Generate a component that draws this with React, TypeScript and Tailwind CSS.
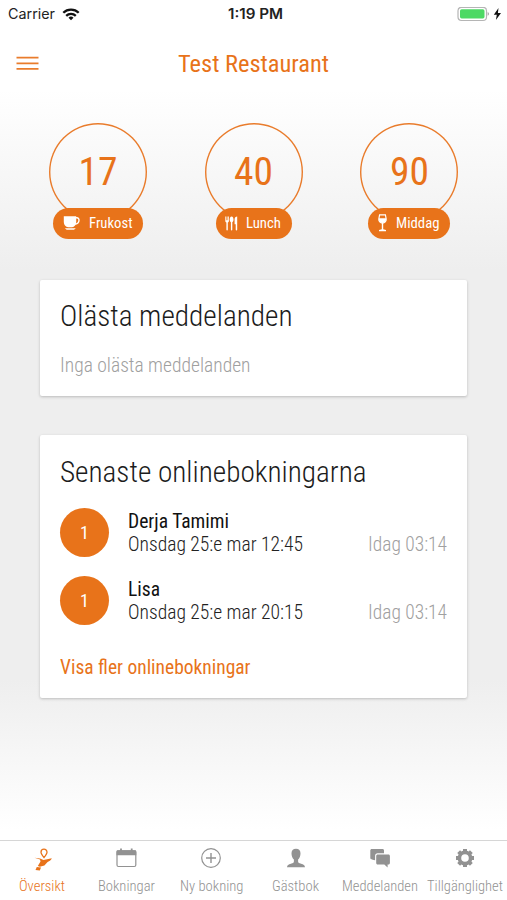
import { useLayoutEffect, useRef, useState, type ReactNode } from "react";

/** Single line of text condensed horizontally to a given width. */
function Fit({ w, className = "", children }: { w: number; className?: string; children: ReactNode }) {
  const ref = useRef<HTMLSpanElement>(null);
  const [scale, setScale] = useState(0.88);
  useLayoutEffect(() => {
    if (ref.current && ref.current.offsetWidth) setScale(w / ref.current.getBoundingClientRect().width * scale);
  }, [w]);
  return (
    <span className={`block whitespace-nowrap ${className}`} style={{ width: w }}>
      <span ref={ref} className="inline-block origin-left" style={{ transform: `scaleX(${scale})` }}>
        {children}
      </span>
    </span>
  );
}

const CupIcon = () => (
  <svg width="17" height="15" viewBox="0 0 17 15" fill="none">
    <path d="M.8.3h12.400v5.700c0 2.900-1.700 4.900-4.200 5.300H5.200C2.600 10.800.8 8.800.8 6z" fill="white" />
    <path d="M12.500 1.800h1.300c3.200 0 3.200 5.900-2 6.200" stroke="white" strokeWidth="1.400" />
    <path d="M1.800 12.200h11l-1.800 1.600H3.700z" fill="white" />
  </svg>
);
const CutleryIcon = () => (
  <svg width="13" height="15" viewBox="0 0 13 15" fill="white">
    <path d="M.3.5h.8v3.700h.6V.5h.8v3.700h.6V.5h.8v4.200c0 1-.5 1.500-1.100 1.800v7.300c0 .8-1.400.8-1.400 0V6.500C.800 6.200.3 5.700.3 4.700z" />
    <path d="M6.600.4c1.300 0 1.900 1.500 1.900 3.200 0 1.400-.5 2.300-1.200 2.700v7.500c0 .8-1.400.8-1.400 0V6.300C5.200 5.900 4.700 5 4.700 3.600 4.700 1.900 5.300.4 6.600.4z" />
    <path d="M12.200.5v13.300c0 .8-1.500.8-1.500 0V8.200H9.600V3.500c0-1.800 1-3 2.600-3z" />
  </svg>
);
const WineIcon = () => (
  <svg width="9" height="18" viewBox="0 0 9 18" fill="none">
    <path d="M1.600.9h5.800l.8 4.100c.2 2.300-1.500 4.100-3.700 4.100S.6 7.300.8 5z" stroke="white" strokeWidth="1.200" />
    <path d="M1 4.200h7v1.500C7.800 7.500 6.300 9 4.500 9S1.200 7.500 1 5.700z" fill="white" />
    <path d="M3.800 8.800h1.400v6.500l2.800.8v1.200H1v-1.200l2.800-.8z" fill="white" />
  </svg>
);

function Meal({ count, countW, label, labelW, pill, icon }: {
  count: string; countW: number; label: string; labelW: number; pill: string; icon: ReactNode;
}) {
  return (
    <div className="flex w-[98px] flex-col items-center">
      <div className="flex h-[98px] w-[98px] items-center justify-center rounded-full text-[39.500px] leading-[46px] text-[#e8731a] shadow-[inset_0_0_0_1.4px_#e97c2c]">
        <Fit w={countW}>{count}</Fit>
      </div>
      <div className={`relative -mt-[13.500px] flex h-[31.500px] items-center rounded-full bg-[#e8731a] text-[15px] leading-[18px] text-white ${pill}`}>
        {icon}
        <Fit w={labelW}>{label}</Fit>
      </div>
    </div>
  );
}

function Booking({ name, nameW, when }: { name: string; nameW: number; when: string }) {
  return (
    <div className="flex h-[49px] items-center">
      <div className="flex h-[49px] w-[49px] shrink-0 items-center justify-center rounded-full bg-[#e8731a] text-[19px] text-white">
        <Fit w={9}>1</Fit>
      </div>
      <div className="ml-[18.500px] flex-1 text-[19.500px] leading-[23px]">
        <Fit w={nameW} className="text-[#111]">{name}</Fit>
        <div className="flex justify-between font-light">
          <Fit w={175} className="text-[#222]">{when}</Fit>
          <Fit w={79} className="text-[#a0a0a0]">Idag 03:14</Fit>
        </div>
      </div>
    </div>
  );
}

const OverviewIcon = () => (
  <svg width="20" height="24" viewBox="0 0 20 24" fill="none">
    <path d="M11 9.500C9.200 7.200 8 5.700 8 4.200a3 3 0 0 1 6 0c0 1.500-1.200 3-3 5.300z" stroke="#e8731a" strokeWidth="1.300" />
    <path d="M1.500 9.800 7 10.600l3.500 1.400 8.300-1.700c-.6 1.700-2.200 3-4.200 3.700l-3.200 3.600-4.600 1.200-2-.9 2.700-4.400-.5-1.900z" fill="#e8731a" />
    <path d="m3.800 19 4.200.6-1.200 2.900-4.300-.4z" fill="#e8731a" />
  </svg>
);
const CalendarIcon = () => (
  <svg width="21" height="20" viewBox="0 0 21 20" fill="none">
    <rect x="1" y="2.800" width="18.800" height="15.700" rx="1.500" stroke="#929292" strokeWidth="1.200" />
    <path d="M.5 3.500c0-.8.5-1.300 1.300-1.300H19c.8 0 1.300.5 1.300 1.300v3.700H.5z" fill="#929292" />
    <path d="M5 .5v3M15.700.5v3" stroke="#929292" strokeWidth="1.800" />
  </svg>
);
const PlusIcon = () => (
  <svg width="22" height="22" viewBox="0 0 22 22" fill="none" stroke="#929292">
    <circle cx="11" cy="11" r="9.300" strokeWidth="1.200" />
    <path d="M6 11h10M11 6v10" strokeWidth="1.400" />
  </svg>
);
const PersonIcon = () => (
  <svg width="20" height="20" viewBox="0 0 20 20" fill="#929292">
    <path d="M10 .8c3 0 4.600 1.700 4.500 4.600 0 2.600-1 4.800-2.400 6v2c0 1.300 1.100 1.700 3 2.300 2.500.8 3.600 1.200 3.900 3.500H1c.3-2.300 1.400-2.700 3.900-3.500 1.900-.6 3-1 3-2.300v-2c-1.400-1.200-2.400-3.400-2.400-6C5.400 2.500 7 .8 10 .8z" />
  </svg>
);
const ChatIcon = () => (
  <svg width="22" height="20" viewBox="0 0 22 20" fill="#929292">
    <path d="M2.800.9h10.700c.9 0 1.500.6 1.500 1.500v2.800H8.600c-1.500 0-2.500 1-2.500 2.500v4.500l-2.500-.4-.8-.5C2 11.300 1.300 10.600 1.300 9.700V2.400c0-.9.6-1.500 1.500-1.500z" />
    <path d="M8.700 6.500h10.700c.9 0 1.500.6 1.500 1.500v7c0 .9-.6 1.500-1.500 1.500h-.8v2.900l-3.300-2.900H8.700c-.9 0-1.500-.6-1.500-1.500V8c0-.9.6-1.500 1.500-1.500z" />
  </svg>
);
const GearIcon = () => (
  <svg width="20" height="20" viewBox="0 0 20 20" fill="none" stroke="#929292">
    <circle cx="10" cy="10" r="5.600" strokeWidth="3.600" />
    <g strokeWidth="4">
      <path d="M10 1v3M10 16v3M1 10h3M16 10h3M3.640 3.640l2 2M14.360 14.360l2 2M3.640 16.360l2-2M14.360 5.640l2-2" />
    </g>
  </svg>
);

const tabs = [
  { label: "Översikt", w: 46, icon: <OverviewIcon /> },
  { label: "Bokningar", w: 57, icon: <CalendarIcon /> },
  { label: "Ny bokning", w: 63.5, icon: <PlusIcon /> },
  { label: "Gästbok", w: 47, icon: <PersonIcon /> },
  { label: "Meddelanden", w: 76, icon: <ChatIcon /> },
  { label: "Tillgänglighet", w: 76, icon: <GearIcon /> },
];

export default function App() {
  return (
    <div className="flex h-[900px] w-[507px] flex-col overflow-hidden bg-[linear-gradient(to_bottom,#fff_90px,#eeeeee_270px,#eeeeee_680px,#fff_830px)] font-['Roboto_Condensed',Roboto,sans-serif] [font-stretch:75%]">
      <div className="flex h-[28px] items-center justify-between pr-[5px] pl-2 font-[Inter,sans-serif] text-[14px] leading-[18px] text-[#222]">
        <div className="flex w-[120px] items-center gap-[7px]">
          <Fit w={47}>Carrier</Fit>
          <svg width="18" height="13" viewBox="0 0 18 13" fill="none" stroke="#111" strokeWidth="2.300">
            <path d="M1.300 4.800a11 11 0 0 1 15.400 0M4.200 7.800a6.900 6.900 0 0 1 9.600 0" />
            <path d="m9 12.300 2.500-2.600a3.700 3.700 0 0 0-5 0z" fill="#111" stroke="none" />
          </svg>
        </div>
        <Fit w={55} className="font-semibold">1:19 PM</Fit>
        <div className="flex w-[120px] items-center justify-end gap-[3px]">
          <svg width="33" height="15" viewBox="0 0 33 15">
            <rect x="1" y=".3" width="28.500" height="13.200" rx="3.500" fill="white" stroke="#b5b5b5" strokeWidth="1.200" />
            <rect x="3" y="2.300" width="24.500" height="9.200" rx="1.700" fill="#4cd964" />
            <path d="M30.700 5c1.600.5 1.600 3.300 0 3.800z" fill="#999" />
          </svg>
          <svg width="9" height="13" viewBox="0 0 9 13" fill="#111"><path d="M5.500 0 .8 6.700h3L2.900 12 8 5H4.900z" /></svg>
        </div>
      </div>
      <div className="flex h-[72px] items-center px-4">
        <svg width="23" height="16" viewBox="0 0 23 16" stroke="#e97c2c" strokeWidth="1.700"><path d="M.5 1.700h22M.5 7.300h22M.5 12.900h22" /></svg>
        <div className="flex flex-1 justify-center pr-[23px] text-[24.500px] leading-[30px] text-[#e8731a]">
          <Fit w={151}>Test Restaurant</Fit>
        </div>
      </div>
      <div className="mt-[23px] flex h-[157px] justify-between px-[49px]">
        <Meal count="17" countW={39} label="Frukost" labelW={43.5} pill="w-[90px] justify-between pr-[11px] pl-[10px]" icon={<CupIcon />} />
        <Meal count="40" countW={39} label="Lunch" labelW={35} pill="w-[76px] justify-between pr-[11px] pl-[9px]" icon={<CutleryIcon />} />
        <Meal count="90" countW={39} label="Middag" labelW={43.5} pill="w-[82px] justify-between pr-[10.500px] pl-[9.500px]" icon={<WineIcon />} />
      </div>
      <div className="mx-10 h-[116px] rounded-[2px] bg-white px-5 shadow-[0_1px_3px_rgba(0,0,0,0.22)]">
        <Fit w={232.5} className="pt-[18px] text-[30px] leading-[36px] font-light text-[#1c1c1c]">Olästa meddelanden</Fit>
        <Fit w={190.5} className="mt-[20px] text-[19.500px] leading-[24px] font-light text-[#a0a0a0]">Inga olästa meddelanden</Fit>
      </div>
      <div className="mx-10 mt-[39px] h-[263px] rounded-[2px] bg-white px-5 shadow-[0_1px_3px_rgba(0,0,0,0.22)]">
        <Fit w={306.5} className="pt-[19px] text-[30px] leading-[36px] font-light text-[#1c1c1c]">Senaste onlinebokningarna</Fit>
        <div className="mt-[18.400px] flex flex-col gap-[19px]">
          <Booking name="Derja Tamimi" nameW={101} when="Onsdag 25:e mar 12:45" />
          <Booking name="Lisa" nameW={32} when="Onsdag 25:e mar 20:15" />
        </div>
        <Fit w={190.5} className="mt-[30.600px] text-[19.500px] leading-[24px] text-[#e8731a]">Visa fler onlinebokningar</Fit>
      </div>
      <div className="mt-auto grid h-[60px] grid-cols-6 border-t border-[#d6d6d6] bg-white">
        {tabs.map((t, i) => (
          <div key={t.label} className={`flex flex-col items-center text-[14.500px] leading-[18px] font-light ${i === 0 ? "text-[#e8731a]" : "text-[#929292]"}`}>
            <div className={`flex h-[34px] items-center ${i === 0 ? "pt-[4px] pl-[2px]" : ""}`}>{t.icon}</div>
            <Fit w={t.w} className="mt-[3px]">{t.label}</Fit>
          </div>
        ))}
      </div>
    </div>
  );
}
